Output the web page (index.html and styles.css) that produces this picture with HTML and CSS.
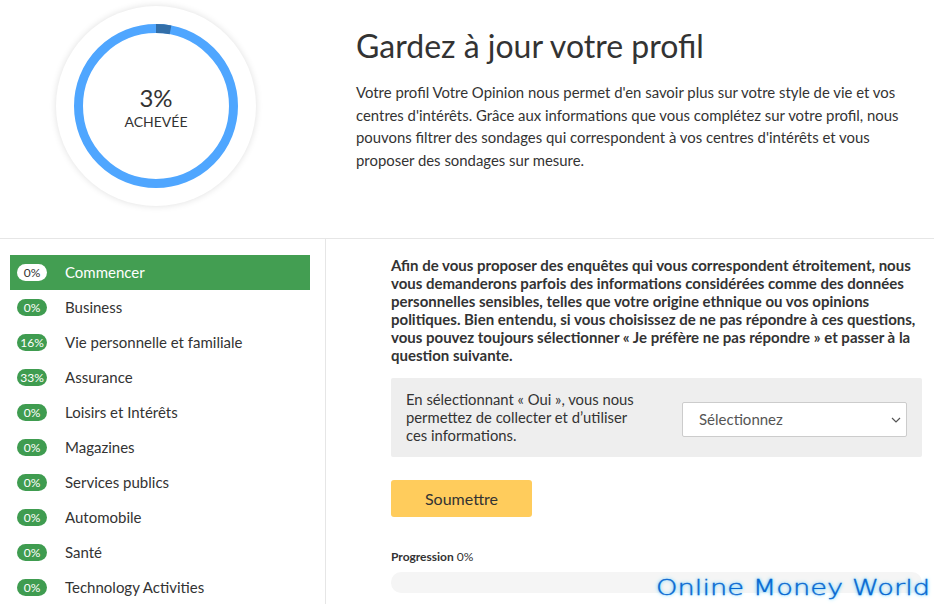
FILE: index.html
```html
<!DOCTYPE html>
<html lang="fr">
<head>
<meta charset="utf-8">
<title>Gardez à jour votre profil</title>
<link rel="stylesheet" href="styles.css">
</head>
<body>
<header class="hero">
  <div class="dial">
    <svg class="dial-ring" width="200" height="200" viewBox="0 0 200 200" aria-hidden="true">
      <circle cx="100" cy="100" r="77.5" fill="none" stroke="#4fa6ff" stroke-width="9"/>
      <circle cx="100" cy="100" r="77.5" fill="none" stroke="#326ea8" stroke-width="9" stroke-dasharray="14.6 472" transform="rotate(-90 100 100)"/>
    </svg>
    <div class="dial-text">
      <div class="dial-num">3%</div>
      <div class="dial-label">ACHEVÉE</div>
    </div>
  </div>
  <div class="intro">
    <h1>Gardez à jour votre profil</h1>
    <p>Votre profil Votre Opinion nous permet d'en savoir plus sur votre style de vie et vos centres d'intérêts. Grâce aux informations que vous complétez sur votre profil, nous pouvons filtrer des sondages qui correspondent à vos centres d'intérêts et vous proposer des sondages sur mesure.</p>
  </div>
</header>
<div class="content">
  <nav class="side">
    <a class="item active"><span class="pill">0%</span><span class="item-name">Commencer</span></a>
    <a class="item"><span class="pill">0%</span><span class="item-name">Business</span></a>
    <a class="item"><span class="pill">16%</span><span class="item-name">Vie personnelle et familiale</span></a>
    <a class="item"><span class="pill">33%</span><span class="item-name">Assurance</span></a>
    <a class="item"><span class="pill">0%</span><span class="item-name">Loisirs et Intérêts</span></a>
    <a class="item"><span class="pill">0%</span><span class="item-name">Magazines</span></a>
    <a class="item"><span class="pill">0%</span><span class="item-name">Services publics</span></a>
    <a class="item"><span class="pill">0%</span><span class="item-name">Automobile</span></a>
    <a class="item"><span class="pill">0%</span><span class="item-name">Santé</span></a>
    <a class="item"><span class="pill">0%</span><span class="item-name">Technology Activities</span></a>
  </nav>
  <main class="panel">
    <p class="lead">Afin de vous proposer des enquêtes qui vous correspondent étroitement, nous vous demanderons parfois des informations considérées comme des données personnelles sensibles, telles que votre origine ethnique ou vos opinions politiques. Bien entendu, si vous choisissez de ne pas répondre à ces questions, vous pouvez toujours sélectionner « Je préfère ne pas répondre » et passer à la question suivante.</p>
    <div class="question">
      <div class="q-text">En sélectionnant « Oui », vous nous permettez de collecter et d’utiliser ces informations.</div>
      <select class="q-select"><option>Sélectionnez</option></select>
    </div>
    <button class="submit" type="button">Soumettre</button>
    <div class="prog-label"><b>Progression</b> 0%</div>
    <div class="prog-bar"></div>
  </main>
</div>
<div class="mark">Online Money World</div>
</body>
</html>
```
FILE: styles.css
```css
html, body { margin: 0; padding: 0; }
body {
  width: 934px;
  height: 604px;
  overflow: hidden;
  position: relative;
  background: #fff;
  color: #333;
  font-family: Lato, "Open Sans", sans-serif;
}
.hero {
  display: flex;
  height: 238px;
  border-bottom: 1px solid #e6e6e6;
  box-sizing: content-box;
}
.dial {
  position: relative;
  flex: none;
  width: 200px;
  height: 200px;
  margin: 6px 0 0 56px;
  border-radius: 50%;
  box-shadow: 0 0 7px rgba(0,0,0,.13);
}
.dial-ring { display: block; }
.dial-text {
  position: absolute;
  inset: 0;
  display: flex;
  flex-direction: column;
  align-items: center;
  justify-content: center;
  padding-top: 4px;
  box-sizing: border-box;
}
.dial-num { font-size: 24px; line-height: 28px; color: #333; }
.dial-label { font-size: 14px; line-height: 20px; color: #333; }
.intro { margin-left: 100px; width: 560px; }
.intro h1 {
  margin: 25px 0 0;
  font-size: 32px;
  line-height: 42px;
  font-weight: 400;
  color: #333;
}
.intro p {
  margin: 14px 0 0;
  font-size: 14.9px;
  line-height: 22.5px;
}
.content { display: flex; }
.side {
  flex: none;
  width: 300px;
  height: 365px;
  padding: 16px 15px 0 10px;
  border-right: 1px solid #e6e6e6;
}
.item {
  display: flex;
  align-items: center;
  height: 35px;
  font-size: 15px;
  color: #333;
}
.item-name { padding-bottom: 2px; }
.pill {
  flex: none;
  width: 30px;
  height: 17px;
  line-height: 17px;
  margin: 0 18px 0 7px;
  border-radius: 9px;
  background: #3f9c50;
  color: #fff;
  font-size: 12px;
  text-align: center;
}
.item.active { background: #439e52; color: #fff; }
.item.active .pill { background: #fff; color: #333; }
.panel { flex: none; width: 531px; margin-left: 65px; padding-top: 17px; }
.lead {
  margin: 0;
  font-size: 15px;
  line-height: 18px;
  font-weight: 700;
  color: #333;
}
.question {
  display: flex;
  align-items: center;
  justify-content: space-between;
  height: 79px;
  margin-top: 14px;
  padding: 0 15px;
  background: #eee;
  border-radius: 2px;
}
.q-text { width: 240px; font-size: 14.8px; line-height: 18px; padding-bottom: 2px; }
.q-select {
  appearance: none;
  width: 225px;
  height: 35px;
  margin-top: 4px;
  padding: 0 12px 2px 16px;
  background: #fff url("data:image/svg+xml,%3Csvg xmlns='http://www.w3.org/2000/svg' width='10' height='6'%3E%3Cpath d='M1 1l4 4 4-4' fill='none' stroke='%23555' stroke-width='1.2'/%3E%3C/svg%3E") no-repeat right 5px center;
  border: 1px solid #ccc;
  border-radius: 2px;
  color: #555;
  font: 15px Lato, sans-serif;
}
.submit {
  display: block;
  width: 141px;
  height: 37px;
  margin-top: 23px;
  border: 0;
  border-radius: 3px;
  background: #ffcc5c;
  color: #333;
  font: 16px Lato, sans-serif;
}
.prog-label { margin-top: 33px; font-size: 12px; line-height: 14px; }
.prog-bar { height: 21px; margin-top: 8px; background: #f5f5f5; border-radius: 10px; }
.mark {
  position: absolute;
  left: 656px;
  top: 576px;
  font-family: "DejaVu Sans", sans-serif;
  font-weight: 200;
  font-size: 21px;
  line-height: 24px;
  white-space: nowrap;
  color: #0766d0;
  -webkit-text-stroke: .3px #0766d0;
  text-shadow: 0 0 2px #4fc3ff, 0 0 4px #6fd0ff;
  transform: scaleX(1.3);
  transform-origin: left center;
}
```
